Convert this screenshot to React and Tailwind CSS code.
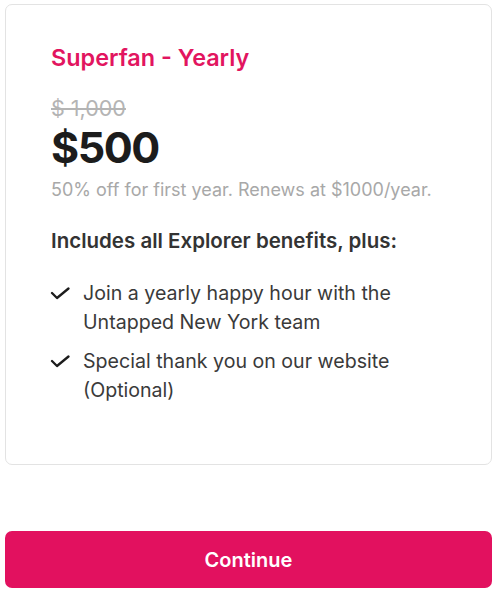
export default function App() {
  const perks = [
    "Join a yearly happy hour with the Untapped New York team",
    "Special thank you on our website (Optional)",
  ];

  return (
    <main className="min-h-screen bg-white pl-[5px] pr-[8px] pt-[4px] font-['Inter',sans-serif]">
      {/* Plan card */}
      <section className="h-[461px] rounded-[7px] border border-[#e3e3e3] bg-white pl-[45px] pr-6 pt-[39px]">
        <h1 className="text-[23.4px] font-semibold leading-[28px] text-[#e2155f]">
          Superfan - Yearly
        </h1>

        <p className="mt-[23px] text-[21.5px] leading-[26px] text-[#b4b4b4] line-through">
          $ 1,000
        </p>
        <p className="mt-[2px] text-[43px] font-bold leading-[48px] tracking-[-1.5px] text-[#1c1c1c]">
          $500
        </p>
        <p className="mt-[7px] text-[18px] leading-[24px] text-[#a8a8a8]">
          50% off for first year. Renews at $1000/year.
        </p>

        <h2 className="mt-[26px] text-[20.5px] font-semibold leading-[26px] text-[#333]">
          Includes all Explorer benefits, plus:
        </h2>

        <ul className="mt-[25px] flex flex-col gap-[10px]">
          {perks.map((perk) => (
            <li key={perk} className="flex items-start">
              <svg
                viewBox="0 0 20 13"
                className="ml-[-1px] mt-[8px] h-[13px] w-[20px] shrink-0"
                fill="none"
                stroke="#1c1c1c"
                strokeWidth="2.3"
                strokeLinecap="round"
                strokeLinejoin="round"
              >
                <path d="M2 6l5 5L18.5 1.5" />
              </svg>
              <span className="ml-[13px] max-w-[340px] text-[19.6px] leading-[29px] text-[#3a3a3a]">
                {perk}
              </span>
            </li>
          ))}
        </ul>
      </section>

      {/* Action */}
      <button className="mt-[66px] h-[57px] w-full rounded-[7px] bg-[#e2115f] text-[20px] font-semibold text-white">
        Continue
      </button>
    </main>
  );
}
